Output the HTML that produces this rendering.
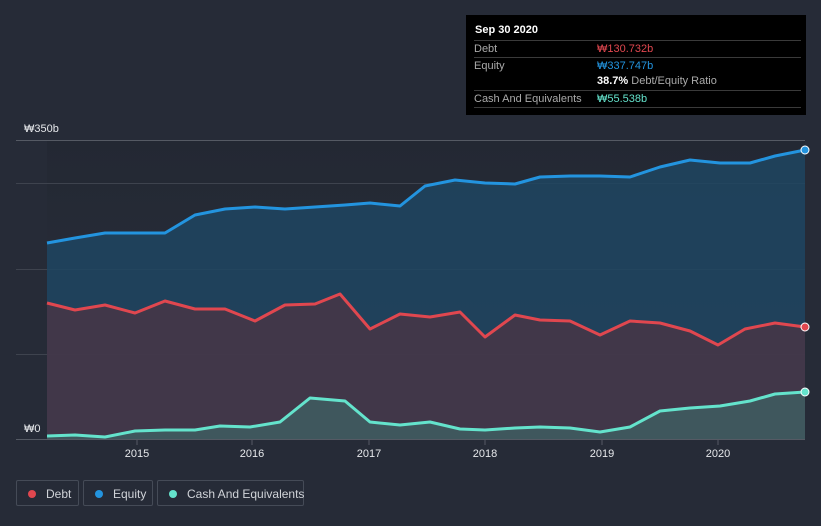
<!DOCTYPE html><html><head><style>body{margin:0;width:821px;height:526px;background:#262b37;font-family:"Liberation Sans",sans-serif;overflow:hidden;position:relative}
.tt{position:absolute;left:466px;top:15px;width:340px;height:100px;background:#000;color:#fff;font-size:11px}
.r{position:absolute;left:8px;width:327px;border-top:1px solid #3a3a3a;height:16px;line-height:16px;color:#aaa}
.lg{position:absolute;top:480px;height:26px;border:1px solid #454b57;border-radius:2px;color:#d0d3d8;font-size:12px;line-height:26px;box-sizing:border-box;white-space:nowrap}
.lg i{display:inline-block;width:8px;height:8px;border-radius:50%;margin:0 10px 0 11px;vertical-align:0px}
</style></head><body>
<svg width="821" height="526" style="position:absolute;left:0;top:0">
<defs><linearGradient id="bg" x1="0" y1="0" x2="0" y2="1"><stop offset="0" stop-color="#232833"/><stop offset="1" stop-color="#2b303c"/></linearGradient></defs>
<rect x="47" y="140" width="758" height="300" fill="url(#bg)"/>
<g stroke="#3e434e" stroke-width="1"><line x1="16" y1="140.5" x2="805" y2="140.5" stroke="#555a64"/><line x1="16" y1="183.5" x2="805" y2="183.5"/><line x1="16" y1="269.5" x2="805" y2="269.5"/><line x1="16" y1="354.5" x2="805" y2="354.5"/><line x1="16" y1="439.5" x2="805" y2="439.5" stroke="#555a64"/></g>
<path d="M47,243 L75,238 105,233 135,233 165,233 195,215 225,209 255,207 285,209 315,207 345,205 370,203 400,206 425,186 455,180 485,183 515,184 540,177 570,176 600,176 630,177 660,167 690,160 720,163 750,163 775,156 805,150 L805,439 47,439Z" fill="#1f4562" fill-opacity=".85"/>
<path d="M47,303 L75,310 105,305 135,313 165,301 195,309 225,309 255,321 285,305 315,304 340,294 370,329 400,314 430,317 460,312 485,337 515,315 540,320 570,321 600,335 630,321 660,323 690,331 718,345 745,329 775,323 805,327 L805,439 47,439Z" fill="#4a3445" fill-opacity=".8"/>
<path d="M47,436 L75,435 105,437 135,431 165,430 195,430 220,426 250,427 280,422 310,398 345,401 370,422 400,425 430,422 460,429 485,430 515,428 540,427 570,428 600,432 630,427 660,411 690,408 720,406 750,401 775,394 805,392 L805,439 47,439Z" fill="#3e6567" fill-opacity=".7"/>
<g fill="none" stroke-width="3" stroke-linejoin="round">
<polyline stroke="#2394df" points="47,243 75,238 105,233 135,233 165,233 195,215 225,209 255,207 285,209 315,207 345,205 370,203 400,206 425,186 455,180 485,183 515,184 540,177 570,176 600,176 630,177 660,167 690,160 720,163 750,163 775,156 805,150"/>
<polyline stroke="#e0474f" points="47,303 75,310 105,305 135,313 165,301 195,309 225,309 255,321 285,305 315,304 340,294 370,329 400,314 430,317 460,312 485,337 515,315 540,320 570,321 600,335 630,321 660,323 690,331 718,345 745,329 775,323 805,327"/>
<polyline stroke="#64e3cc" points="47,436 75,435 105,437 135,431 165,430 195,430 220,426 250,427 280,422 310,398 345,401 370,422 400,425 430,422 460,429 485,430 515,428 540,427 570,428 600,432 630,427 660,411 690,408 720,406 750,401 775,394 805,392"/>
</g>
<circle cx="805" cy="150" r="4" fill="#2394df" stroke="#fff" stroke-width="1"/>
<circle cx="805" cy="327" r="4" fill="#e0474f" stroke="#fff" stroke-width="1"/>
<circle cx="805" cy="392" r="4" fill="#64e3cc" stroke="#fff" stroke-width="1"/>
<rect x="16" y="418" width="31" height="21" fill="#262b37"/>
<g stroke="#555a64"><line x1="137" y1="440" x2="137" y2="445"/><line x1="252" y1="440" x2="252" y2="445"/><line x1="369" y1="440" x2="369" y2="445"/><line x1="485" y1="440" x2="485" y2="445"/><line x1="602" y1="440" x2="602" y2="445"/><line x1="718" y1="440" x2="718" y2="445"/></g>
<g fill="#e6e8eb" font-size="11" font-family="Liberation Sans,sans-serif">
<text x="24" y="132">₩350b</text><text x="24" y="432">₩0</text>
<g text-anchor="middle"><text x="137" y="457">2015</text><text x="252" y="457">2016</text><text x="369" y="457">2017</text><text x="485" y="457">2018</text><text x="602" y="457">2019</text><text x="718" y="457">2020</text></g></g>
</svg>
<div class="tt"><div style="position:absolute;left:9px;top:9px;font-weight:bold">Sep 30 2020</div>
<div class="r" style="top:25px">Debt<span style="position:absolute;left:123px;color:#e0474f">₩130.732b</span></div>
<div class="r" style="top:42px">Equity<span style="position:absolute;left:123px;color:#2394df">₩337.747b</span></div>
<div class="r" style="top:58px;border:0"><span style="position:absolute;left:123px;color:#fff;white-space:nowrap"><b>38.7%</b> <span style="color:#aaa">Debt/Equity Ratio</span></span></div>
<div class="r" style="top:75px">Cash And Equivalents<span style="position:absolute;left:123px;color:#64e3cc">₩55.538b</span></div>
<div class="r" style="top:92px;height:0"></div></div>
<div class="lg" style="left:16px;width:63px"><i style="background:#e0474f"></i>Debt</div>
<div class="lg" style="left:83px;width:70px"><i style="background:#2394df"></i>Equity</div>
<div class="lg" style="left:157px;width:147px"><i style="background:#64e3cc"></i>Cash And Equivalents</div>
</body></html>
